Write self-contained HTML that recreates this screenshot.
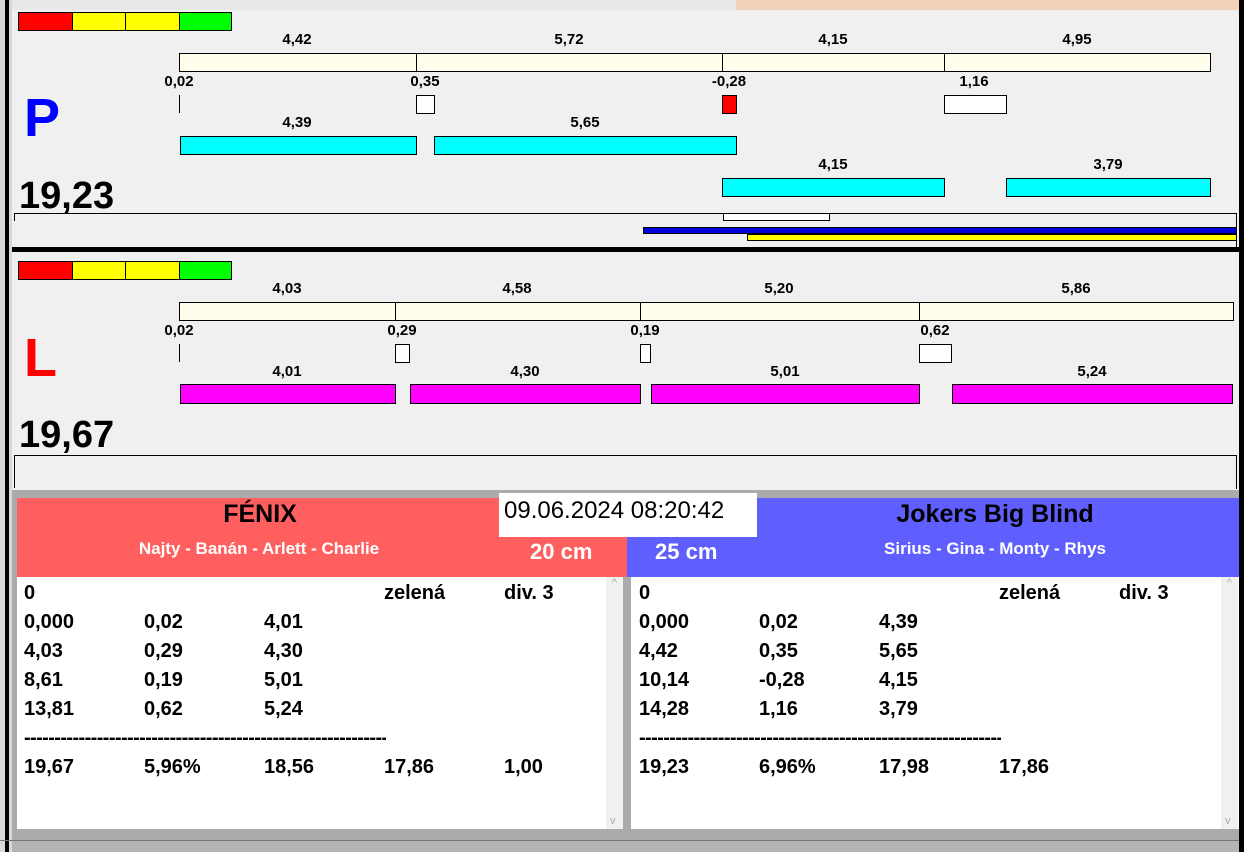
<!DOCTYPE html><html><head><meta charset="utf-8"><style>
*{margin:0;padding:0;box-sizing:border-box}
body{width:1244px;height:852px;position:relative;overflow:hidden;background:#ababab;font-family:"Liberation Sans",sans-serif}
div{position:absolute}
.b{border:1px solid #000}
.t{font-weight:bold;font-size:15px;transform:translateX(-50%);white-space:nowrap;line-height:16px}
.r{font-weight:bold;font-size:20px;line-height:24px;white-space:nowrap}
.cr{background:#fffdeb}.cy{background:#00ffff}.mg{background:#ff00ff}
.d{font-weight:bold;font-size:20px;line-height:20px;white-space:nowrap;overflow:hidden;width:362px;letter-spacing:-0.6px}
</style></head><body>
<div style="left:0;top:0;width:1244px;height:10px;background:#e8e8e8"></div>
<div style="left:736px;top:0;width:504px;height:12px;background:#f2d2b8"></div>
<div style="left:0;top:0;width:12px;height:852px;background:#d8d8d8"></div>
<div style="left:5px;top:0;width:4px;height:852px;background:#000"></div>
<div style="left:1239px;top:0;width:5px;height:852px;background:#000"></div>
<!-- top panel -->
<div style="left:12px;top:10px;width:1227px;height:237px;background:#f0f0f0"></div>
<div class="b" style="left:18px;top:12px;width:55px;height:19px;background:#f00"></div>
<div class="b" style="left:72px;top:12px;width:54px;height:19px;background:#ff0"></div>
<div class="b" style="left:125px;top:12px;width:55px;height:19px;background:#ff0"></div>
<div class="b" style="left:179px;top:12px;width:53px;height:19px;background:#0f0"></div>
<div class="t" style="left:297px;top:32px">4,42</div><div class="t" style="left:569px;top:32px">5,72</div><div class="t" style="left:833px;top:32px">4,15</div><div class="t" style="left:1077px;top:32px">4,95</div>
<div class="b cr" style="left:179px;top:53px;width:238px;height:19px"></div>
<div class="b cr" style="left:416px;top:53px;width:307px;height:19px"></div>
<div class="b cr" style="left:722px;top:53px;width:223px;height:19px"></div>
<div class="b cr" style="left:944px;top:53px;width:267px;height:19px"></div>
<div class="t" style="left:179px;top:74px">0,02</div><div class="t" style="left:425px;top:74px">0,35</div><div class="t" style="left:729px;top:74px">-0,28</div><div class="t" style="left:974px;top:74px">1,16</div>
<div style="left:179px;top:95px;width:1px;height:18px;background:#000"></div>
<div class="b" style="left:416px;top:95px;width:19px;height:19px;background:#fff"></div>
<div class="b" style="left:722px;top:95px;width:15px;height:19px;background:#f00"></div>
<div class="b" style="left:944px;top:95px;width:63px;height:19px;background:#fff"></div>
<div class="t" style="left:297px;top:115px">4,39</div><div class="t" style="left:585px;top:115px">5,65</div>
<div class="b cy" style="left:180px;top:136px;width:237px;height:19px"></div>
<div class="b cy" style="left:434px;top:136px;width:303px;height:19px"></div>
<div class="t" style="left:833px;top:157px">4,15</div><div class="t" style="left:1108px;top:157px">3,79</div>
<div class="b cy" style="left:722px;top:178px;width:223px;height:19px"></div>
<div class="b cy" style="left:1006px;top:178px;width:205px;height:19px"></div>
<div style="left:24px;top:88px;font-size:54px;font-weight:bold;color:#0000ff;line-height:60px">P</div>
<div style="left:19px;top:174px;font-size:38px;font-weight:bold;line-height:44px">19,23</div>
<div style="left:14px;top:213px;width:1223px;height:1px;background:#000"></div>
<div style="left:1236px;top:213px;width:1px;height:34px;background:#000"></div>
<div style="left:14px;top:213px;width:1px;height:8px;background:#000"></div>
<div class="b" style="left:723px;top:213px;width:107px;height:8px;background:#fff"></div>
<div style="left:643px;top:227px;width:594px;height:7px;background:#0000dd;border:1px solid #000"></div>
<div style="left:747px;top:234px;width:490px;height:7px;background:#ff0;border:1px solid #000"></div>
<div style="left:12px;top:247px;width:1227px;height:5px;background:#000"></div>
<!-- second panel -->
<div style="left:12px;top:252px;width:1227px;height:238px;background:#f0f0f0"></div>
<div class="b" style="left:18px;top:261px;width:55px;height:19px;background:#f00"></div>
<div class="b" style="left:72px;top:261px;width:54px;height:19px;background:#ff0"></div>
<div class="b" style="left:125px;top:261px;width:55px;height:19px;background:#ff0"></div>
<div class="b" style="left:179px;top:261px;width:53px;height:19px;background:#0f0"></div>
<div class="t" style="left:287px;top:281px">4,03</div><div class="t" style="left:517px;top:281px">4,58</div><div class="t" style="left:779px;top:281px">5,20</div><div class="t" style="left:1076px;top:281px">5,86</div>
<div class="b cr" style="left:179px;top:302px;width:217px;height:19px"></div>
<div class="b cr" style="left:395px;top:302px;width:246px;height:19px"></div>
<div class="b cr" style="left:640px;top:302px;width:280px;height:19px"></div>
<div class="b cr" style="left:919px;top:302px;width:315px;height:19px"></div>
<div class="t" style="left:179px;top:323px">0,02</div><div class="t" style="left:402px;top:323px">0,29</div><div class="t" style="left:645px;top:323px">0,19</div><div class="t" style="left:935px;top:323px">0,62</div>
<div style="left:179px;top:344px;width:1px;height:18px;background:#000"></div>
<div class="b" style="left:395px;top:344px;width:15px;height:19px;background:#fff"></div>
<div class="b" style="left:640px;top:344px;width:11px;height:19px;background:#fff"></div>
<div class="b" style="left:919px;top:344px;width:33px;height:19px;background:#fff"></div>
<div class="t" style="left:287px;top:364px">4,01</div><div class="t" style="left:525px;top:364px">4,30</div><div class="t" style="left:785px;top:364px">5,01</div><div class="t" style="left:1092px;top:364px">5,24</div>
<div class="b mg" style="left:180px;top:384px;width:216px;height:20px"></div>
<div class="b mg" style="left:410px;top:384px;width:231px;height:20px"></div>
<div class="b mg" style="left:651px;top:384px;width:269px;height:20px"></div>
<div class="b mg" style="left:952px;top:384px;width:281px;height:20px"></div>
<div style="left:24px;top:328px;font-size:54px;font-weight:bold;color:#f00;line-height:60px">L</div>
<div style="left:19px;top:413px;font-size:38px;font-weight:bold;line-height:44px">19,67</div>
<div style="left:14px;top:455px;width:1223px;height:1px;background:#000"></div>
<div style="left:1236px;top:455px;width:1px;height:34px;background:#000"></div>
<div style="left:14px;top:455px;width:1px;height:33px;background:#000"></div>
<!-- headers -->
<div style="left:17px;top:498px;width:610px;height:79px;background:#ff5f5f"></div>
<div style="left:627px;top:498px;width:612px;height:79px;background:#5f5fff"></div>
<div style="left:260px;top:500px;transform:translateX(-50%);font-size:25px;font-weight:bold">FÉNIX</div>
<div style="left:259px;top:539px;transform:translateX(-50%);font-size:17px;font-weight:bold;color:#fff;white-space:nowrap">Najty - Banán - Arlett - Charlie</div>
<div style="left:530px;top:539px;font-size:22px;font-weight:bold;color:#fff">20 cm</div>
<div style="left:655px;top:539px;font-size:22px;font-weight:bold;color:#fff">25 cm</div>
<div style="left:995px;top:500px;transform:translateX(-50%);font-size:25px;font-weight:bold;white-space:nowrap">Jokers Big Blind</div>
<div style="left:995px;top:539px;transform:translateX(-50%);font-size:17px;font-weight:bold;color:#fff;white-space:nowrap">Sirius - Gina - Monty - Rhys</div>
<div style="left:499px;top:493px;width:258px;height:44px;background:#fff;font-size:24px;line-height:36px;padding-left:5px">09.06.2024 08:20:42</div>
<!-- lists -->
<div style="left:17px;top:577px;width:606px;height:252px;background:#fff"></div>
<div style="left:606px;top:577px;width:17px;height:252px;background:#f0f0f0;color:#aaa;font-size:11px;text-align:center">^<br><span style="position:absolute;bottom:2px;left:4px">v</span></div>
<div style="left:631px;top:577px;width:608px;height:252px;background:#fff"></div>
<div style="left:1221px;top:577px;width:17px;height:252px;background:#f0f0f0;color:#aaa;font-size:11px;text-align:center">^<br><span style="position:absolute;bottom:2px;left:4px">v</span></div>
<div style="left:0;top:840px;width:1239px;height:1px;background:#777"></div>
<div style="left:12px;top:841px;width:1227px;height:11px;background:#b4b4b4"></div>

<div class="r" style="left:24px;top:581px">0</div><div class="r" style="left:384px;top:581px">zelená</div><div class="r" style="left:504px;top:581px">div. 3</div>
<div class="r" style="left:24px;top:610px">0,000</div><div class="r" style="left:144px;top:610px">0,02</div><div class="r" style="left:264px;top:610px">4,01</div>
<div class="r" style="left:24px;top:639px">4,03</div><div class="r" style="left:144px;top:639px">0,29</div><div class="r" style="left:264px;top:639px">4,30</div>
<div class="r" style="left:24px;top:668px">8,61</div><div class="r" style="left:144px;top:668px">0,19</div><div class="r" style="left:264px;top:668px">5,01</div>
<div class="r" style="left:24px;top:697px">13,81</div><div class="r" style="left:144px;top:697px">0,62</div><div class="r" style="left:264px;top:697px">5,24</div>
<div class="d" style="left:24px;top:728px">------------------------------------------------------------------</div>
<div class="r" style="left:24px;top:755px">19,67</div><div class="r" style="left:144px;top:755px">5,96%</div><div class="r" style="left:264px;top:755px">18,56</div><div class="r" style="left:384px;top:755px">17,86</div><div class="r" style="left:504px;top:755px">1,00</div>

<div class="r" style="left:639px;top:581px">0</div><div class="r" style="left:999px;top:581px">zelená</div><div class="r" style="left:1119px;top:581px">div. 3</div>
<div class="r" style="left:639px;top:610px">0,000</div><div class="r" style="left:759px;top:610px">0,02</div><div class="r" style="left:879px;top:610px">4,39</div>
<div class="r" style="left:639px;top:639px">4,42</div><div class="r" style="left:759px;top:639px">0,35</div><div class="r" style="left:879px;top:639px">5,65</div>
<div class="r" style="left:639px;top:668px">10,14</div><div class="r" style="left:759px;top:668px">-0,28</div><div class="r" style="left:879px;top:668px">4,15</div>
<div class="r" style="left:639px;top:697px">14,28</div><div class="r" style="left:759px;top:697px">1,16</div><div class="r" style="left:879px;top:697px">3,79</div>
<div class="d" style="left:639px;top:728px">------------------------------------------------------------------</div>
<div class="r" style="left:639px;top:755px">19,23</div><div class="r" style="left:759px;top:755px">6,96%</div><div class="r" style="left:879px;top:755px">17,98</div><div class="r" style="left:999px;top:755px">17,86</div>
</body></html>
